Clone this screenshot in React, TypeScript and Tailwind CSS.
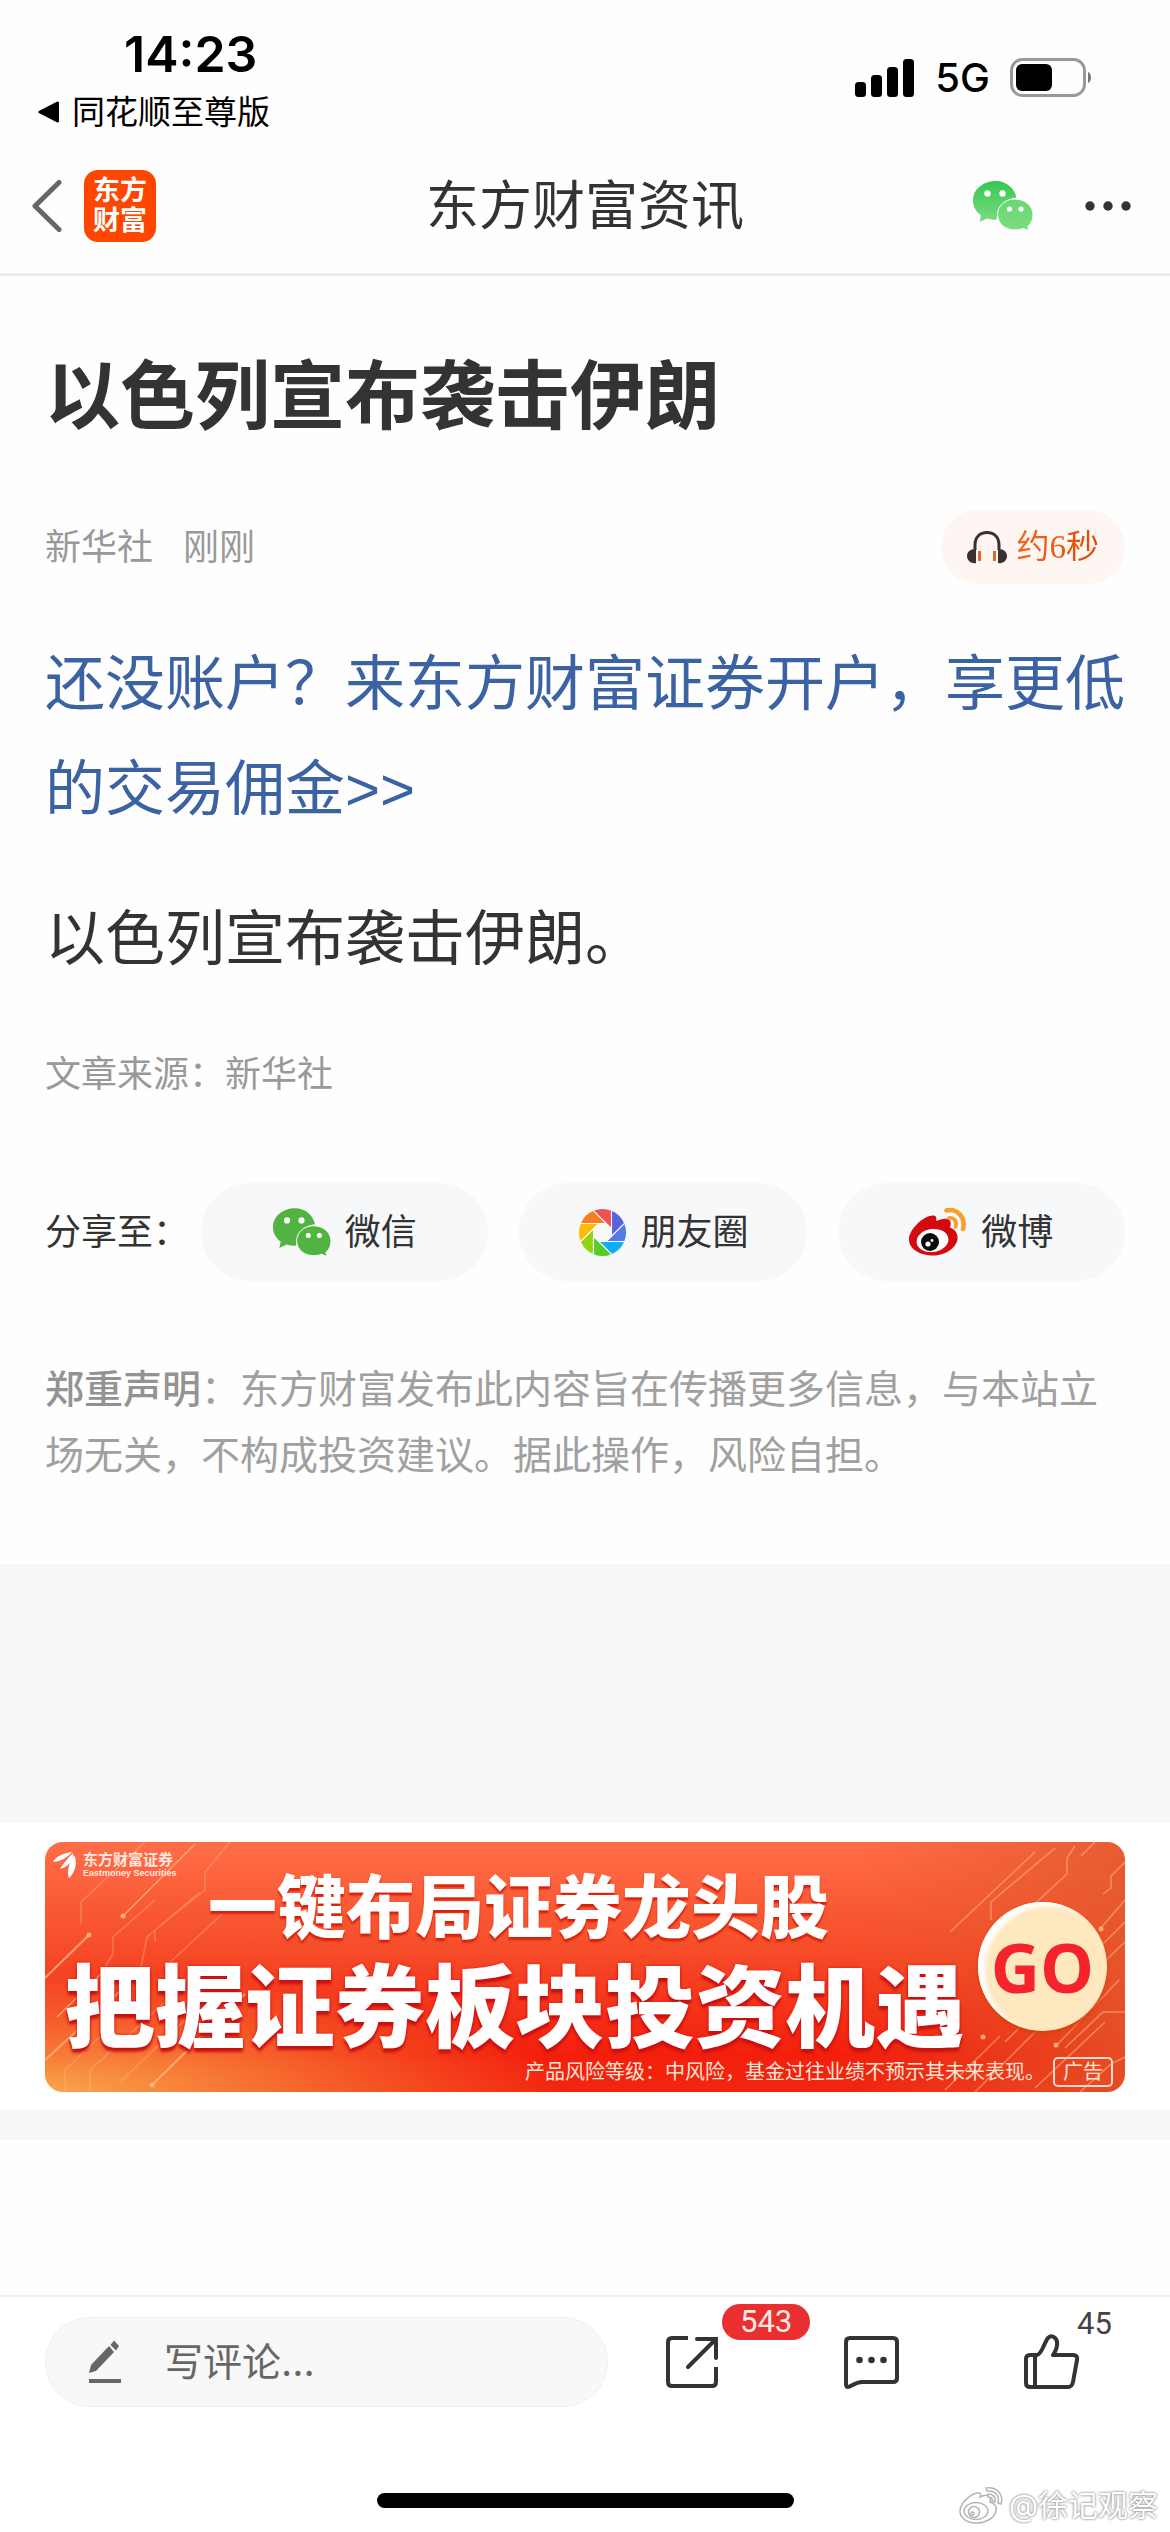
import { useId } from "react";
import type { ReactNode } from "react";

const WECHAT_BIG =
  "M23 0C10 0 0 8.500 0 19.500C0 25.500 3 30.800 8 34.500L6.500 41L14 37.500C17 38.500 20 39 24 38.500C23 27 32 17.500 43.500 16.500C41.500 7 33 0 23 0Z";
const WECHAT_SMALL =
  "M42 18C32 18 24.500 25 24.500 33.500C24.500 42.500 32 49 42 49C45 49 48 48.500 50.500 47.500L56 50L54.800 45.500C58.500 42.500 60 38.500 60 33.500C60 25 52 18 42 18Z";

function WechatIcon({ className, tones }: { className: string; tones: [string, string, string] }) {
  const id = useId();
  return (
    <svg viewBox="0 0 60 50" className={className} aria-hidden="true">
      <defs>
        <linearGradient id={`${id}a`} x1="0" y1="0" x2="0" y2="1">
          <stop offset="0" stopColor={tones[0]} />
          <stop offset="1" stopColor={tones[1]} />
        </linearGradient>
        <linearGradient id={`${id}b`} x1="0" y1="0" x2="0" y2="1">
          <stop offset="0" stopColor={tones[2]} />
          <stop offset="1" stopColor={tones[1]} />
        </linearGradient>
      </defs>
      <path d={WECHAT_BIG} fill={`url(#${id}a)`} />
      <path d={WECHAT_SMALL} fill={`url(#${id}b)`} stroke="#fff" strokeWidth="1" />
      <circle cx="14.500" cy="12.500" r="3.200" fill="#fff" />
      <circle cx="29.500" cy="12.500" r="3.200" fill="#fff" />
      <circle cx="36.500" cy="28" r="2.600" fill="#fff" />
      <circle cx="48" cy="28" r="2.600" fill="#fff" />
    </svg>
  );
}

const BLADES = ["#ee5253", "#5b62dc", "#5479e8", "#0cb0f0", "#56cc28", "#93d211", "#fdbb0a", "#fb7d1c"];

function MomentsIcon() {
  return (
    <svg viewBox="-25 -25 50 50" className="size-[49px]" aria-hidden="true">
      {BLADES.map((color, i) => (
        <path
          key={color}
          d="M-9.180 -22.170A24 24 0 0 1 9.180 -22.170L9.180 -3.800Z"
          fill={color}
          transform={`rotate(${i * 45})`}
        />
      ))}
      {BLADES.map((color, i) => (
        <path key={color} d="M-9.600 -22.600L9.180 -3.800" stroke="#fff" strokeWidth="1.200" transform={`rotate(${i * 45})`} />
      ))}
    </svg>
  );
}

function WeiboIcon() {
  return (
    <svg viewBox="0 0 58 48" className="h-12 w-[58px]" aria-hidden="true">
      <path
        d="M24 7.500C27.500 7.500 27.800 10 27 13C32 10.500 39 9.500 41 12.500C42.500 15 41.500 18 41 19.500C46 21.500 49 25 48.500 31C47.500 40 36 47.500 24 47.500C11 47.500 0 41 0 31.500C0 21 15 7.500 24 7.500Z"
        fill="#d30a10"
      />
      <ellipse cx="23.500" cy="32.500" rx="16" ry="11.500" fill="#fff" transform="rotate(-8 23.500 32.500)" />
      <circle cx="21" cy="34" r="9" fill="#0c0c0c" />
      <circle cx="19" cy="36" r="2.600" fill="#fff" />
      <circle cx="23" cy="32.500" r="1.400" fill="#fff" />
      <path d="M37.500 2.500C48 0 57 9 54 21" fill="none" stroke="#f5a12c" strokeWidth="4.600" strokeLinecap="round" />
      <path d="M40 10C44.500 9 48.500 13 46.500 19" fill="none" stroke="#f5a12c" strokeWidth="3.800" strokeLinecap="round" />
    </svg>
  );
}

function StatusBar() {
  return (
    <div className="flex items-start justify-between pr-[76px] pl-9 text-black">
      <div>
        <div className="pt-7 pl-[88px] font-[Inter] text-[50px] leading-[52px] font-semibold">14:23</div>
        <a href="#back-to-app" className="flex items-center gap-3 pt-3 text-[33px] leading-10">
          <svg viewBox="0 0 22 22" className="ml-[2px] size-[22px]" aria-hidden="true">
            <path d="M2 11L19.500 2V20Z" fill="#000" stroke="#000" strokeWidth="3" strokeLinejoin="round" />
          </svg>
          同花顺至尊版
        </a>
      </div>
      <div className="flex items-center gap-5 pt-[52px]">
        <svg viewBox="0 0 60 38" className="h-[38px] w-[60px]" aria-hidden="true">
          <rect x="0" y="23" width="11" height="15" rx="3.500" />
          <rect x="16" y="16" width="11" height="22" rx="3.500" />
          <rect x="32" y="8" width="11" height="30" rx="3.500" />
          <rect x="48" y="0" width="11" height="38" rx="3.500" />
        </svg>
        <span className="font-[Inter] text-[40px] leading-[52px] font-medium">5G</span>
        <svg viewBox="0 0 84 40" className="h-10 w-[84px]" aria-hidden="true">
          <rect x="1.500" y="1.500" width="73" height="36" rx="11" fill="none" stroke="#999" strokeWidth="3" />
          <rect x="6" y="6" width="36" height="27" rx="6" />
          <path d="M78 14C82 15 82 24 78 25Z" fill="#777" />
        </svg>
      </div>
    </div>
  );
}

function NavBar() {
  return (
    <header className="grid grid-cols-[1fr_auto_1fr] items-center border-b-[3px] border-[#ececec] px-8 pt-[38px] pb-[31px]">
      <div className="flex items-center gap-[22px]">
        <button type="button" aria-label="返回">
          <svg viewBox="0 0 30 52" className="h-[52px] w-[30px]" fill="none" aria-hidden="true">
            <path d="M27 2.500L3 26L27 49.500" stroke="#666" strokeWidth="5" strokeLinecap="round" strokeLinejoin="round" />
          </svg>
        </button>
        <a
          href="#home"
          className="grid size-[72px] place-content-center rounded-[14px] bg-[#fe4600] text-center text-[27px] leading-[30px] font-bold text-white"
        >
          <span>东方</span>
          <span>财富</span>
        </a>
      </div>
      <h2 className="text-[53px] leading-[72px] text-[#333]">东方财富资讯</h2>
      <div className="flex items-center justify-end gap-[52px] pr-[7px]">
        <button type="button" aria-label="分享到微信">
          <WechatIcon className="h-[50px] w-[60px]" tones={["#35c651", "#7ddc80", "#65d873"]} />
        </button>
        <button type="button" aria-label="更多">
          <svg viewBox="0 0 46 10" className="h-[10px] w-[46px]" fill="#333" aria-hidden="true">
            <circle cx="5" cy="5" r="4.700" />
            <circle cx="23" cy="5" r="4.700" />
            <circle cx="41" cy="5" r="4.700" />
          </svg>
        </button>
      </div>
    </header>
  );
}

function ShareButton({ icon, label }: { icon: ReactNode; label: string }) {
  return (
    <button type="button" className="flex h-[98px] flex-1 items-center justify-center gap-[14px] rounded-full bg-[#f7f8fa]">
      {icon}
      {label}
    </button>
  );
}

function Article() {
  return (
    <article className="px-[45px] pt-[66px] pb-[76px] text-[#333]">
      <h1 className="text-[75px] leading-[108px] font-bold">以色列宣布袭击伊朗</h1>
      <div className="mt-[60px] flex items-center justify-between text-4xl">
        <div className="flex gap-[30px] text-[#999]">
          <span>新华社</span>
          <span>刚刚</span>
        </div>
        <button type="button" className="flex h-[74px] items-center gap-[10px] rounded-full bg-[#fef6f3] px-[26px]">
          <svg viewBox="0 0 40 33" className="h-[33px] w-10" aria-hidden="true">
            <path d="M8 19V14C8 6 13 1.500 20 1.500S32 6 32 14V19" fill="none" stroke="#3a3030" strokeWidth="3" />
            <path d="M9 18V32C4 33 0 29.500 0 25S4 17.500 9 18Z" fill="#3a3030" />
            <path d="M31 18V32C36 33 40 29.500 40 25S36 17.500 31 18Z" fill="#3a3030" />
            <rect x="11" y="20" width="3" height="10" fill="#e0682c" />
            <rect x="26" y="20" width="3" height="10" fill="#e0682c" />
          </svg>
          <span className="bg-linear-to-r from-[#f0681c] to-[#e04a08] bg-clip-text font-['Liberation_Serif','Noto_Sans_CJK_SC',serif] text-[33px] leading-10 text-transparent">
            约6秒
          </span>
        </button>
      </div>
      <p className="mt-12 font-['Liberation_Sans','Noto_Sans_CJK_SC',sans-serif] text-[60px] leading-[105px]">
        <a href="#open-account" className="text-[#3b62a3]">
          还没账户？来东方财富证券开户，享更低的交易佣金&gt;&gt;
        </a>
      </p>
      <p className="mt-11 text-[60px] leading-[105px]">以色列宣布袭击伊朗。</p>
      <p className="mt-14 text-4xl leading-[54px] text-[#999]">文章来源：新华社</p>
      <div className="mt-[82px] flex items-center gap-[31px] text-4xl">
        <span className="-mr-[19px]">分享至：</span>
        <ShareButton icon={<WechatIcon className="h-[49px] w-[58px]" tones={["#51b442", "#51b442", "#51b442"]} />} label="微信" />
        <ShareButton icon={<MomentsIcon />} label="朋友圈" />
        <ShareButton icon={<WeiboIcon />} label="微博" />
      </div>
      <p className="mt-[75px] text-[39px] leading-[66px] text-[#a0a0a0]">
        <span className="font-medium text-[#939393]">郑重声明</span>：东方财富发布此内容旨在传播更多信息，与本站立场无关，不构成投资建议。据此操作，风险自担。
      </p>
    </article>
  );
}

function CircuitLines() {
  return (
    <svg
      viewBox="0 0 1080 250"
      preserveAspectRatio="none"
      className="absolute inset-0 size-full"
      fill="none"
      stroke="#ffb98a"
      strokeWidth="1.500"
      aria-hidden="true"
    >
      <g opacity="0.75">
        <path d="M0 136L44 93M0 218L85 140M107 243L200 152" strokeWidth="2" />
        <path d="M78 74L150 2M12 175L60 128" />
      </g>
      <g opacity="0.4">
        <path d="M36 82V60L100 0M60 125L68 112V95L110 58M110 100V88L160 48V30L185 0M20 250V228L60 190M45 250V228L140 142M75 240L180 140M95 130L102 95L155 50M120 125L190 60" />
      </g>
      <g opacity="0.55">
        <path d="M1080 20L1066 34V46L1058 52M1050 0L1036 14M1030 4L1022 16V32L970 80M1080 58L1056 86M990 10L905 90M1010 6L946 60V78M1080 100L1040 138M1080 170H1058L1020 206M1074 138L1010 205M1080 80L960 200M955 194L900 248M1080 215L1066 222L1035 250M1000 180L930 250M1060 180L990 246" />
      </g>
      <g fill="#ffb98a" stroke="none" opacity="0.85">
        <circle cx="44" cy="93" r="2.500" />
        <circle cx="78" cy="74" r="2.500" />
        <circle cx="107" cy="243" r="2.500" />
        <circle cx="1056" cy="87" r="2.500" />
        <circle cx="1011" cy="203" r="2.500" />
        <circle cx="938" cy="195" r="2.500" />
      </g>
    </svg>
  );
}

function AdBanner() {
  return (
    <section className="bg-white px-[45px] pt-[19px] pb-[18px]">
      <a
        href="#ad"
        className="relative block h-[250px] overflow-hidden rounded-[18px] bg-[radial-gradient(ellipse_at_0%_100%,#f9a54a_0%,transparent_34%),linear-gradient(90deg,transparent_75%,#e2582bcc_100%),linear-gradient(180deg,#ff6e48_0%,#f64f2b_40%,#f31f0c_85%,#f2260f_100%)] text-white"
      >
        <CircuitLines />
        <div className="relative flex flex-col">
          <div className="flex items-center gap-[6px] pt-[10px] pl-2">
            <svg viewBox="0 0 24 26" className="h-[26px] w-6" fill="#fff" aria-hidden="true">
              <path d="M0 10C3 4 11 1 19 0C15 5 9 9 0 10Z" />
              <path d="M7 17C10 12 14 7 20 1C21 8 15 15 7 17Z" />
              <path d="M16 26C13 19 17 10 21 3C25 11 22 20 16 26Z" />
            </svg>
            <div className="text-[#ffe9e0]">
              <div className="text-[15px] leading-4 font-bold">东方财富证券</div>
              <div className="font-['Liberation_Sans',sans-serif] text-[9px] leading-[10px] font-bold">Eastmoney Securities</div>
            </div>
          </div>
          <div className="-mt-2 pl-[163px] text-[69px] leading-[76px] font-black whitespace-nowrap [text-shadow:0_3px_2px_#d8200c]">
            一键布局证券龙头股
          </div>
          <div className="mt-[10px] pl-5 text-[90px] leading-[104px] font-black whitespace-nowrap [text-shadow:0_4px_3px_#c81010,0_0_3px_#d81818]">
            把握证券板块投资机遇
          </div>
        </div>
        <span className="absolute top-[60px] right-[18px] grid size-[129px] place-content-center rounded-full bg-[#fee8bf] font-['Open_Sans',sans-serif] text-[68px] font-bold text-[#f4242c] shadow-[inset_7px_4px_4px_#fff,0_3px_4px_#d8400c]">
          GO
        </span>
        <div className="absolute right-3 bottom-1 flex items-center gap-2 text-xl leading-8 text-[#ffe3d6]">
          产品风险等级：中风险，基金过往业绩不预示其未来表现。
          <span className="rounded-[5px] border-2 border-[#ffd9c8] px-2 leading-[26px]">广告</span>
        </div>
      </a>
    </section>
  );
}

function CommentBar() {
  return (
    <footer className="mt-auto border-t-2 border-[#f0f0f0] bg-white pb-6">
      <div className="flex items-center pt-5 pr-[91px] pl-[45px]">
        <label className="flex h-[90px] flex-1 items-center gap-[43px] rounded-full border border-[#f0f0f0] bg-[#f8f8f8] pl-[43px]">
          <svg viewBox="0 0 32 44" className="h-11 w-8 shrink-0" fill="#666" aria-hidden="true">
            <path d="M0 33L2 25L20 6L25 12L7 31Z" />
            <path d="M21.500 5L25 0.500L30 6L27 10.500Z" />
            <rect x="0" y="39" width="32" height="4" />
          </svg>
          <input
            type="text"
            aria-label="写评论"
            placeholder="写评论..."
            className="w-full min-w-0 bg-transparent text-[39px] leading-[60px] outline-none placeholder:text-[#666]"
          />
        </label>
        <div className="ml-[58px] flex items-center gap-[125px]">
          <button type="button" aria-label="分享" className="relative">
            <svg viewBox="0 0 53 54" className="h-[54px] w-[53px]" fill="none" stroke="#333" strokeWidth="4" aria-hidden="true">
              <path d="M22 3H6Q2 3 2 7V47Q2 51 6 51H46Q50 51 50 47V32" />
              <path d="M31 4H50V23M50 4L22 32" strokeLinecap="round" />
            </svg>
            <span className="absolute -top-[31px] left-[56px] h-9 rounded-full bg-[#ea2f30] px-[18px] font-[Roboto] text-[31px] leading-9 text-[#ffe9e4]">
              543
            </span>
          </button>
          <button type="button" aria-label="评论">
            <svg viewBox="0 0 55 54" className="h-[54px] w-[55px]" fill="none" stroke="#333" strokeWidth="4" strokeLinejoin="round" aria-hidden="true">
              <path d="M6 3H49Q53 3 53 7V43Q53 47 49 47H18C11 47 7 52 4 52Q2 52 2 49V7Q2 3 6 3Z" />
              <g fill="#333" stroke="none">
                <circle cx="15.500" cy="25" r="3.300" />
                <circle cx="27.500" cy="25" r="3.300" />
                <circle cx="39.500" cy="25" r="3.300" />
              </g>
            </svg>
          </button>
          <button type="button" aria-label="点赞" className="relative">
            <svg viewBox="0 0 55 56" className="h-14 w-[55px]" fill="none" stroke="#333" strokeWidth="4" strokeLinejoin="round" aria-hidden="true">
              <path d="M13 21C18 20 20 9 24 4C28 0 34 4 33 11C33 15 31 18 29 21H49Q54 21 53 26L49 48Q48 53 44 53H6Q2 53 2 49V25Q2 21 6 21ZM11 21V53" />
            </svg>
            <span className="absolute -top-7 left-[53px] font-[Roboto] text-[31px] leading-9 text-[#444]">45</span>
          </button>
        </div>
      </div>
      <div className="mx-auto mt-[86px] h-[15px] w-[417px] rounded-full bg-black" />
    </footer>
  );
}

function Watermark() {
  return (
    <div className="absolute right-3 bottom-2 flex items-center gap-[6px] text-[30px] leading-[38px] text-white [text-shadow:0_0_3px_#888,0_0_2px_#aaa]">
      <svg viewBox="0 0 44 38" className="h-[38px] w-11" fill="#fff" stroke="#b5b5b5" strokeWidth="1.500" aria-hidden="true">
        <path d="M18 7C22 6 22 9 21 11C27 8 33 9 31 16C36 18 38 20 37 25C35 33 26 37 17 37C8 37 1 32 1 25C1 17 12 8 18 7Z" />
        <ellipse cx="17" cy="25" rx="12" ry="8.500" />
        <circle cx="15" cy="26" r="5.500" />
        <circle cx="13.500" cy="27.500" r="1.500" />
        <path d="M27 2C37 0 45 8 42 18L39 17C41 10 36 4 28 5Z" />
        <path d="M29 8C34 8 37 11 36 16L33 15C34 12 32 11 29 11Z" />
      </svg>
      @徐记观察
    </div>
  );
}

export default function App() {
  return (
    <div className="relative flex min-h-screen flex-col bg-[#fefefe] font-[Inter,'Noto_Sans_CJK_SC',sans-serif]">
      <StatusBar />
      <NavBar />
      <main>
        <Article />
        <div className="h-[259px] bg-[#f8f8f8]" />
        <AdBanner />
        <div className="h-[30px] bg-[#f8f8f8]" />
      </main>
      <CommentBar />
      <Watermark />
    </div>
  );
}
